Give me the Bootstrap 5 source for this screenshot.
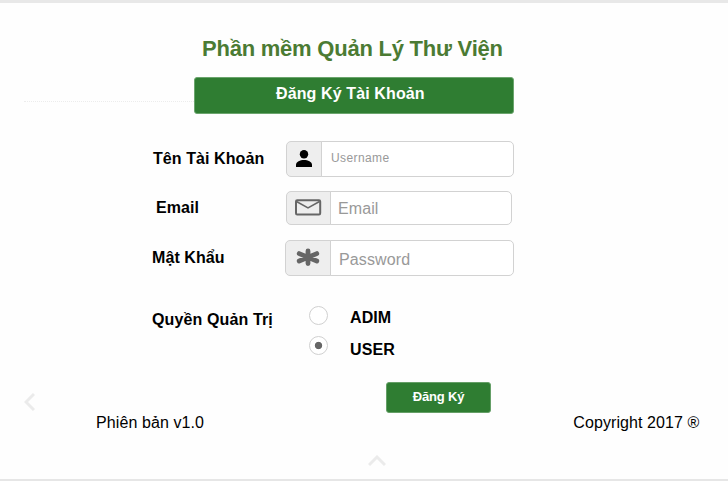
<!DOCTYPE html>
<html lang="vi">
<head>
<meta charset="utf-8">
<meta name="viewport" content="width=device-width, initial-scale=1">
<title>Phần mềm Quản Lý Thư Viện</title>
<link href="https://cdn.jsdelivr.net/npm/bootstrap@5.3.0/dist/css/bootstrap.min.css" rel="stylesheet">
<style>
body { font-family: "Liberation Sans", Arial, sans-serif; font-size: 16px; line-height: 20px; color: #000; background: #fefefe; }
.screen { height: 481px; border-top: 3px solid #e8e8e8; border-bottom: 2px solid #e6e6e6; }
.app-title { font-size: 22px; line-height: 26px; letter-spacing: -.23px; color: #4b7b33; margin: 33px 0 0 202px; white-space: nowrap; }
.banner-row { margin-top: 15px; height: 37px; padding-left: 24px; }
.rule { width: 170px; border-top: 1px dotted #ececec; margin-top: 24px; }
.banner { width: 320px; height: 37px; background: #2f7d32; border: 1px solid #6ba56d; border-radius: 3px; color: #fff; padding: 6px 0 0 81px; letter-spacing: .12px; white-space: nowrap; }
.field-label { white-space: nowrap; width: 134px; padding-left: 1px; letter-spacing: .08px; }
.field-row { padding-left: 152px; }
.row-user { margin-top: 27px; height: 36px; }
.row-mail { margin-top: 14px; height: 34px; }
.row-pass { margin-top: 15px; height: 36px; padding-left: 151px; }
.input-group { height: 100%; flex-wrap: nowrap; }
.input-group-text { background: #eee; border-color: #d2d2d2; padding: 0; justify-content: center; border-radius: 5px; }
.form-control, .form-control:focus { border-color: #d2d2d2; padding: 0 8px; font-size: 16px; line-height: 20px; min-height: 0; border-radius: 5px; box-shadow: none; }
.form-control::placeholder { color: #999; opacity: 1; }
.row-user .input-group { width: 228px; }
.row-user .input-group-text { width: 36px; }
.row-user .form-control { font-size: 12px; letter-spacing: .4px; padding: 0 9px 3px; }
.row-mail .input-group { width: 226px; }
.row-mail .input-group-text { width: 45px; padding-right: 1px; }
.row-mail .form-control { padding: 1px 0 0 7px; letter-spacing: .1px; }
.row-pass .input-group { width: 229px; }
.row-pass .input-group-text { width: 46px; }
.row-pass .form-control { padding-top: 3px; letter-spacing: .12px; }
.role-row { margin-top: 29px; height: 52px; padding-left: 152px; }
.role-label { width: 157px; padding-top: 5px; letter-spacing: .12px; white-space: nowrap; }
.role-line { height: 30px; }
.role-line .form-check-input { width: 19px; height: 19px; margin: 1px 22px 0 0; border: 1px solid #d0d0d0; box-shadow: none; }
.role-line .form-check-input:checked { background: radial-gradient(circle, #666 0 3.3px, #fff 4.1px); }
.role-line label { padding-top: 3px; letter-spacing: .1px; }
.role-line + .role-line label { padding-top: 5px; }
.action-row { margin-top: 25px; height: 31px; padding-left: 24px; }
.prev { margin: 11px 351px 0 0; }
.submit { width: 105px; height: 31px; padding: 0 0 2px; background: #2f7d32; border: 1px solid #659f67; border-radius: 3px; color: #fff; font-size: 13px; line-height: 16px; letter-spacing: -.2px; font-weight: 700; white-space: nowrap; }
.footer-row { padding: 0 28.500px 0 96px; height: 20px; letter-spacing: .09px; white-space: nowrap; }
.up { margin: 21.500px 0 0 368px; }
</style>
<script src="https://cdn.jsdelivr.net/npm/bootstrap@5.3.0/dist/js/bootstrap.bundle.min.js"></script>
</head>
<body>
<main class="screen overflow-hidden d-flex flex-column">
  <h1 class="app-title fw-bold mb-0"><span>Phần mềm Quản Lý Thư Viện</span></h1>
  <div class="banner-row d-flex">
    <div class="rule"></div>
    <div class="banner fw-bold"><span>Đăng Ký Tài Khoản</span></div>
  </div>
  <div class="field-row row-user d-flex align-items-center">
    <label class="field-label fw-bold" for="user">Tên Tài Khoản</label>
    <div class="input-group">
      <span class="input-group-text"><svg width="18" height="20" viewBox="0 0 18 20"><circle cx="9" cy="5.200" r="4.200"/><path d="M1 18v-2.100C1 12.600 5.200 11 9 11s8 1.600 8 4.900V18z"/></svg></span>
      <input class="form-control" id="user" type="text" placeholder="Username">
    </div>
  </div>
  <div class="field-row row-mail d-flex align-items-center">
    <label class="field-label fw-bold ps-1" for="mail">Email</label>
    <div class="input-group">
      <span class="input-group-text"><svg width="28" height="20" viewBox="0 0 28 20" fill="none" stroke="#666" stroke-width="2"><rect x="2" y="2.200" width="24.200" height="14.300" rx="1.200"/><path d="M2.500 3.500 14 9.800 25.500 3.500" stroke-width="1.500"/></svg></span>
      <input class="form-control" id="mail" type="email" placeholder="Email">
    </div>
  </div>
  <div class="field-row row-pass d-flex align-items-center">
    <label class="field-label fw-bold" for="pass">Mật Khẩu</label>
    <div class="input-group">
      <span class="input-group-text"><svg width="24" height="20" viewBox="0 0 24 20" stroke="#666" stroke-width="4.800" stroke-linecap="round"><path d="M12 3v12.600M3.200 5.600l17.600 7.400M20.800 5.600 3.200 13"/></svg></span>
      <input class="form-control" id="pass" type="password" placeholder="Password">
    </div>
  </div>
  <div class="role-row d-flex">
    <div class="role-label fw-bold">Quyền Quản Trị</div>
    <div>
      <div class="role-line d-flex"><input class="form-check-input" type="radio" name="role" id="adim"><label class="fw-bold" for="adim">ADIM</label></div>
      <div class="role-line d-flex"><input class="form-check-input" type="radio" name="role" id="userRole" checked><label class="fw-bold" for="userRole">USER</label></div>
    </div>
  </div>
  <div class="action-row d-flex align-items-start">
    <svg class="prev" width="11" height="18" viewBox="0 0 11 18" fill="none" stroke="#ebebeb" stroke-width="3"><path d="M10 1 2 9l8 8"/></svg>
    <button class="btn submit" type="button">Đăng Ký</button>
  </div>
  <footer class="footer-row d-flex justify-content-between">
    <span>Phiên bản v1.0</span><span>Copyright 2017 ®</span>
  </footer>
  <svg class="up" width="18" height="11" viewBox="0 0 18 11" fill="none" stroke="#ebebeb" stroke-width="3"><path d="m1 10 8-8 8 8"/></svg>
</main>
</body>
</html>
